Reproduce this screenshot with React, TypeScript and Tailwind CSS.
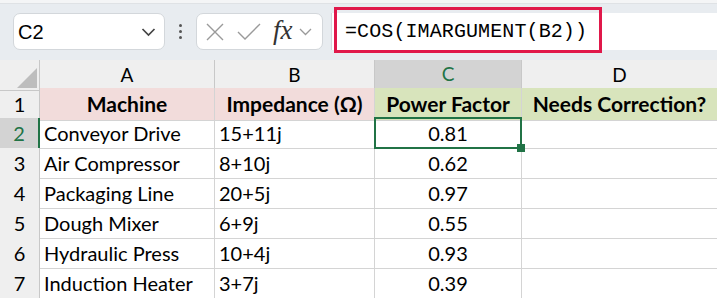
import React from "react";

const rows = [
  ["Conveyor Drive", "15+11j", "0.81"],
  ["Air Compressor", "8+10j", "0.62"],
  ["Packaging Line", "20+5j", "0.97"],
  ["Dough Mixer", "6+9j", "0.55"],
  ["Hydraulic Press", "10+4j", "0.93"],
  ["Induction Heater", "3+7j", "0.39"],
];

const cols = "grid grid-cols-[40px_175px_160px_147px_195px]";

export default function App() {
  return (
    <div className="w-[717px] h-[298px] overflow-hidden bg-white font-['Lato',sans-serif] text-black">
      {/* toolbar */}
      <div className="h-[60px] bg-[#e8ecf0] flex flex-col">
        <div className="h-[4px] bg-[#f4f5f6] border-b border-[#dfe2e5]" />
        <div className="flex items-start pt-[9px]">
          <div className="ml-[13px] w-[152px] h-[37px] bg-white border border-[#d3d7db] rounded-[7px] flex items-center justify-between pl-[4px] pr-[8px]">
            <span className="font-['Liberation_Sans',sans-serif] text-[20px] leading-none">C2</span>
            <svg width="15" height="10" viewBox="0 0 15 10" fill="none">
              <path d="M1.5 2 L7.5 8 L13.5 2" stroke="#444" strokeWidth="1.7" />
            </svg>
          </div>
          <div className="w-[31px] h-[37px] flex flex-col items-center justify-center gap-[3px]">
            <span className="w-[3px] h-[3px] bg-[#555] rounded-full" />
            <span className="w-[3px] h-[3px] bg-[#555] rounded-full" />
            <span className="w-[3px] h-[3px] bg-[#555] rounded-full" />
          </div>
          <div className="w-[127px] h-[37px] bg-white border border-[#d3d7db] rounded-[7px] flex items-center pl-[9px]">
            <svg width="18" height="18" viewBox="0 0 18 18" fill="none">
              <path d="M1 1 L17 17 M17 1 L1 17" stroke="#9a9a9a" strokeWidth="1.4" />
            </svg>
            <svg className="ml-[13px]" width="24" height="18" viewBox="0 0 24 18" fill="none">
              <path d="M1 9 L8 16 L23 1" stroke="#9a9a9a" strokeWidth="1.4" />
            </svg>
            <span className="ml-[12px] font-['Liberation_Serif',serif] italic text-[27px] leading-none text-[#333] -mt-[3px]">fx</span>
            <svg className="ml-[6px]" width="13" height="8" viewBox="0 0 13 8" fill="none">
              <path d="M1 1 L6.5 6.5 L12 1" stroke="#9a9a9a" strokeWidth="1.3" />
            </svg>
          </div>
          <div className="ml-[8px] flex-1 h-[37px] bg-white border-l border-[#d3d7db] relative">
            <div className="absolute left-[2px] top-[-6px] w-[268px] h-[46px] border-[3px] border-[#e0184a]" />
            <div className="pl-[13px] h-full flex items-center font-['Liberation_Mono',monospace] text-[20px] tracking-[0.1px] text-black">
              =COS(IMARGUMENT(B2))
            </div>
          </div>
        </div>
      </div>

      {/* grid */}
      <div className={`${cols} h-[28px] bg-[#efefef] text-[19px]`}>
        <div className="border-r border-b border-[#c8c8c8] relative">
          <svg className="absolute right-[2px] bottom-[2px]" width="20" height="20" viewBox="0 0 20 20">
            <path d="M20 0 L20 20 L0 20 Z" fill="#bdbdbd" />
          </svg>
        </div>
        <div className="border-r border-b border-[#c8c8c8] flex items-center justify-center">A</div>
        <div className="border-r border-b border-[#c8c8c8] flex items-center justify-center">B</div>
        <div className="bg-[#d3d3d3] border-r border-[#c8c8c8] border-b-2 border-b-[#217346] text-[#217346] flex items-center justify-center">C</div>
        <div className="border-b border-[#c8c8c8] flex items-center justify-center">D</div>
      </div>

      <div className={`${cols} h-[30px] text-[21px] font-bold`}>
        <div className="bg-[#efefef] border-r border-b border-[#c8c8c8] flex items-center justify-center font-normal text-[20px]">1</div>
        <div className="bg-[#f2dcdb] border-r border-b border-[#d4d4d4] flex items-center justify-center">Machine</div>
        <div className="bg-[#f2dcdb] border-r border-b border-[#d4d4d4] flex items-center justify-center">Impedance (Ω)</div>
        <div className="bg-[#d8e4bc] border-r border-b border-[#d4d4d4] flex items-center justify-center">Power Factor</div>
        <div className="bg-[#d8e4bc] border-b border-[#d4d4d4] flex items-center justify-center">Needs Correction?</div>
      </div>

      {rows.map((r, i) => {
        const sel = i === 0;
        return (
          <div key={i} className={`${cols} h-[30px] text-[20px]`}>
            <div
              className={
                sel
                  ? "bg-[#d3d3d3] text-[#217346] border-r-2 border-r-[#217346] border-b border-b-[#c8c8c8] flex items-center justify-center"
                  : "bg-[#efefef] border-r border-b border-[#c8c8c8] flex items-center justify-center"
              }
            >
              {i + 2}
            </div>
            <div className="border-r border-b border-[#d4d4d4] flex items-center pl-[4px]">{r[0]}</div>
            <div className="border-r border-b border-[#d4d4d4] flex items-center pl-[4px]">{r[1]}</div>
            <div className="border-r border-b border-[#d4d4d4] flex items-center justify-center relative">
              {sel && (
                <>
                  <div className="absolute z-10 left-[-1px] top-[-1px] right-[-1px] bottom-[-1px] border-2 border-[#217346]" />
                  <div className="absolute z-20 right-[-4px] bottom-[-4px] w-[8px] h-[8px] bg-[#217346]" />
                </>
              )}
              {r[2]}
            </div>
            <div className="border-b border-[#d4d4d4]" />
          </div>
        );
      })}
    </div>
  );
}
